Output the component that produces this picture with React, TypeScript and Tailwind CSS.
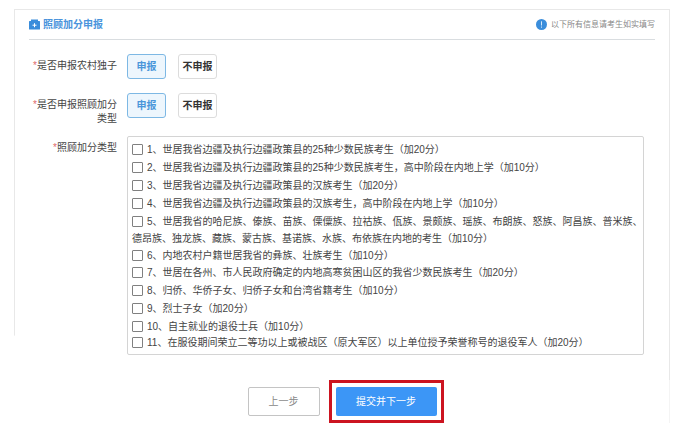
import { useState } from 'react';

interface BonusOption {
  id: number;
  label: string;
  lineClass: string;
}

const BONUS_OPTIONS: BonusOption[] = [
  { id: 1, label: '世居我省边疆及执行边疆政策县的25种少数民族考生（加20分）', lineClass: 'leading-[18px]' },
  { id: 2, label: '世居我省边疆及执行边疆政策县的25种少数民族考生，高中阶段在内地上学（加10分）', lineClass: 'leading-[18px]' },
  { id: 3, label: '世居我省边疆及执行边疆政策县的汉族考生（加20分）', lineClass: 'leading-[18px]' },
  { id: 4, label: '世居我省边疆及执行边疆政策县的汉族考生，高中阶段在内地上学（加10分）', lineClass: 'leading-[18px]' },
  {
    id: 5,
    label:
      '世居我省的哈尼族、傣族、苗族、傈僳族、拉祜族、佤族、景颇族、瑶族、布朗族、怒族、阿昌族、普米族、德昂族、独龙族、藏族、蒙古族、基诺族、水族、布依族在内地的考生（加10分）',
    lineClass: 'leading-[17px]',
  },
  { id: 6, label: '内地农村户籍世居我省的彝族、壮族考生（加10分）', lineClass: 'leading-[17px]' },
  { id: 7, label: '世居在各州、市人民政府确定的内地高寒贫困山区的我省少数民族考生（加20分）', lineClass: 'leading-[18px]' },
  { id: 8, label: '归侨、华侨子女、归侨子女和台湾省籍考生（加10分）', lineClass: 'leading-[18px]' },
  { id: 9, label: '烈士子女（加20分）', lineClass: 'leading-[18px]' },
  { id: 10, label: '自主就业的退役士兵（加10分）', lineClass: 'leading-[17px]' },
  { id: 11, label: '在服役期间荣立二等功以上或被战区（原大军区）以上单位授予荣誉称号的退役军人（加20分）', lineClass: 'leading-[16px]' },
];

interface ApplyToggleProps {
  label: string;
  value: boolean;
  onChange: (value: boolean) => void;
}

function ApplyToggle({ label, value, onChange }: ApplyToggleProps) {
  const base = 'h-[25px] w-[39px] rounded-[3px] border font-bold';
  const active = 'border-[#7db8e4] bg-[#edf6fd] text-[#4a96da]';
  const idle = 'border-[#dcdcdc] bg-white text-[#333]';

  return (
    <div role="group" aria-label={label} className="flex gap-3">
      <button type="button" aria-pressed={value} onClick={() => onChange(true)} className={`${base} ${value ? active : idle}`}>
        申报
      </button>
      <button type="button" aria-pressed={!value} onClick={() => onChange(false)} className={`${base} ${value ? idle : active}`}>
        不申报
      </button>
    </div>
  );
}

function FieldLabel({ children }: { children: string }) {
  return (
    <div className="w-[88px] shrink-0 text-right leading-[14px] text-[#444]">
      <span className="text-[#e06a6a]">*</span>
      {children}
    </div>
  );
}

export default function App() {
  const [onlyChild, setOnlyChild] = useState(true);
  const [bonus, setBonus] = useState(true);
  const [selected, setSelected] = useState<number[]>([]);

  const toggleOption = (id: number) => {
    setSelected((current) => (current.includes(id) ? current.filter((item) => item !== id) : [...current, id]));
  };

  return (
    <main className="min-h-screen bg-white px-[14px] pt-[9px] font-['Liberation_Sans','Noto_Sans_CJK_SC',sans-serif] text-[10px] text-[#444]">
      {/* the left edge line stops before the bottom of the card */}
      <section className="border-t border-r border-[#e8e8e8] bg-[linear-gradient(#e8e8e8,#e8e8e8)] bg-[length:1px_88%] bg-left-top bg-no-repeat pr-[14px] pb-[25px] pl-[15px]">
        <header className="flex h-[30px] items-center justify-between border-b border-[#d9dde0]">
          <h1 className="flex items-center gap-[3px] font-bold text-[#4a94dc]">
            <svg viewBox="0 0 11 11" className="size-[11px]" aria-hidden="true">
              <path d="M2 0.5h7v1.5H2z" fill="#3a8ddb" />
              <rect x="0" y="2" width="11" height="8.5" rx="0.5" fill="#3a8ddb" />
              <path d="M5.5 4.2v4M3.5 6.2h4" stroke="#fff" strokeWidth="1" />
            </svg>
            照顾加分申报
          </h1>
          <p className="flex items-center gap-1 text-[8px] text-[#888]">
            <svg viewBox="0 0 11 11" className="size-[11px]" aria-hidden="true">
              <circle cx="5.5" cy="5.5" r="5.5" fill="#3a8ddb" />
              <path d="M5.5 2.3v4.2M5.5 7.5v1.2" stroke="#d5e8f9" strokeWidth="1" />
            </svg>
            以下所有信息请考生如实填写
          </p>
        </header>

        <div className="mt-[14px] flex gap-[10px]">
          <div className="pt-[5px]">
            <FieldLabel>是否申报农村独子</FieldLabel>
          </div>
          <ApplyToggle label="是否申报农村独子" value={onlyChild} onChange={setOnlyChild} />
        </div>

        <div className="mt-[14px] flex gap-[10px]">
          <div className="pt-[5px]">
            <FieldLabel>是否申报照顾加分类型</FieldLabel>
          </div>
          <ApplyToggle label="是否申报照顾加分类型" value={bonus} onChange={setBonus} />
        </div>

        <div className="mt-[10px] flex gap-[10px]">
          <div className="pt-[5px]">
            <FieldLabel>照顾加分类型</FieldLabel>
          </div>
          <ul className="mr-[11px] flex-1 rounded-[2px] border border-[#d4d4d4] pt-1 pb-[3px] pl-1">
            {BONUS_OPTIONS.map((option) => (
              <li key={option.id} className={option.lineClass}>
                <label>
                  <input
                    type="checkbox"
                    checked={selected.includes(option.id)}
                    onChange={() => toggleOption(option.id)}
                    className="mr-1 size-[11px] appearance-none rounded-[1px] border border-[#808080] bg-white align-[-2px] checked:bg-[#3c95f5]"
                  />
                  {`${option.id}、${option.label}`}
                </label>
              </li>
            ))}
          </ul>
        </div>
      </section>

      <footer className="flex items-center justify-center gap-[9px] border-r border-[#f4f4f4] pl-2">
        <button type="button" className="h-[29px] w-[72px] rounded-[2px] border border-[#c4c4c4] bg-white text-[#888]">
          上一步
        </button>
        <div className="border-[3px] border-[#cc1420] p-1">
          <button type="button" className="block h-[29px] w-[101px] rounded-[2px] bg-[#3c96f6] text-white">
            提交并下一步
          </button>
        </div>
      </footer>
    </main>
  );
}
